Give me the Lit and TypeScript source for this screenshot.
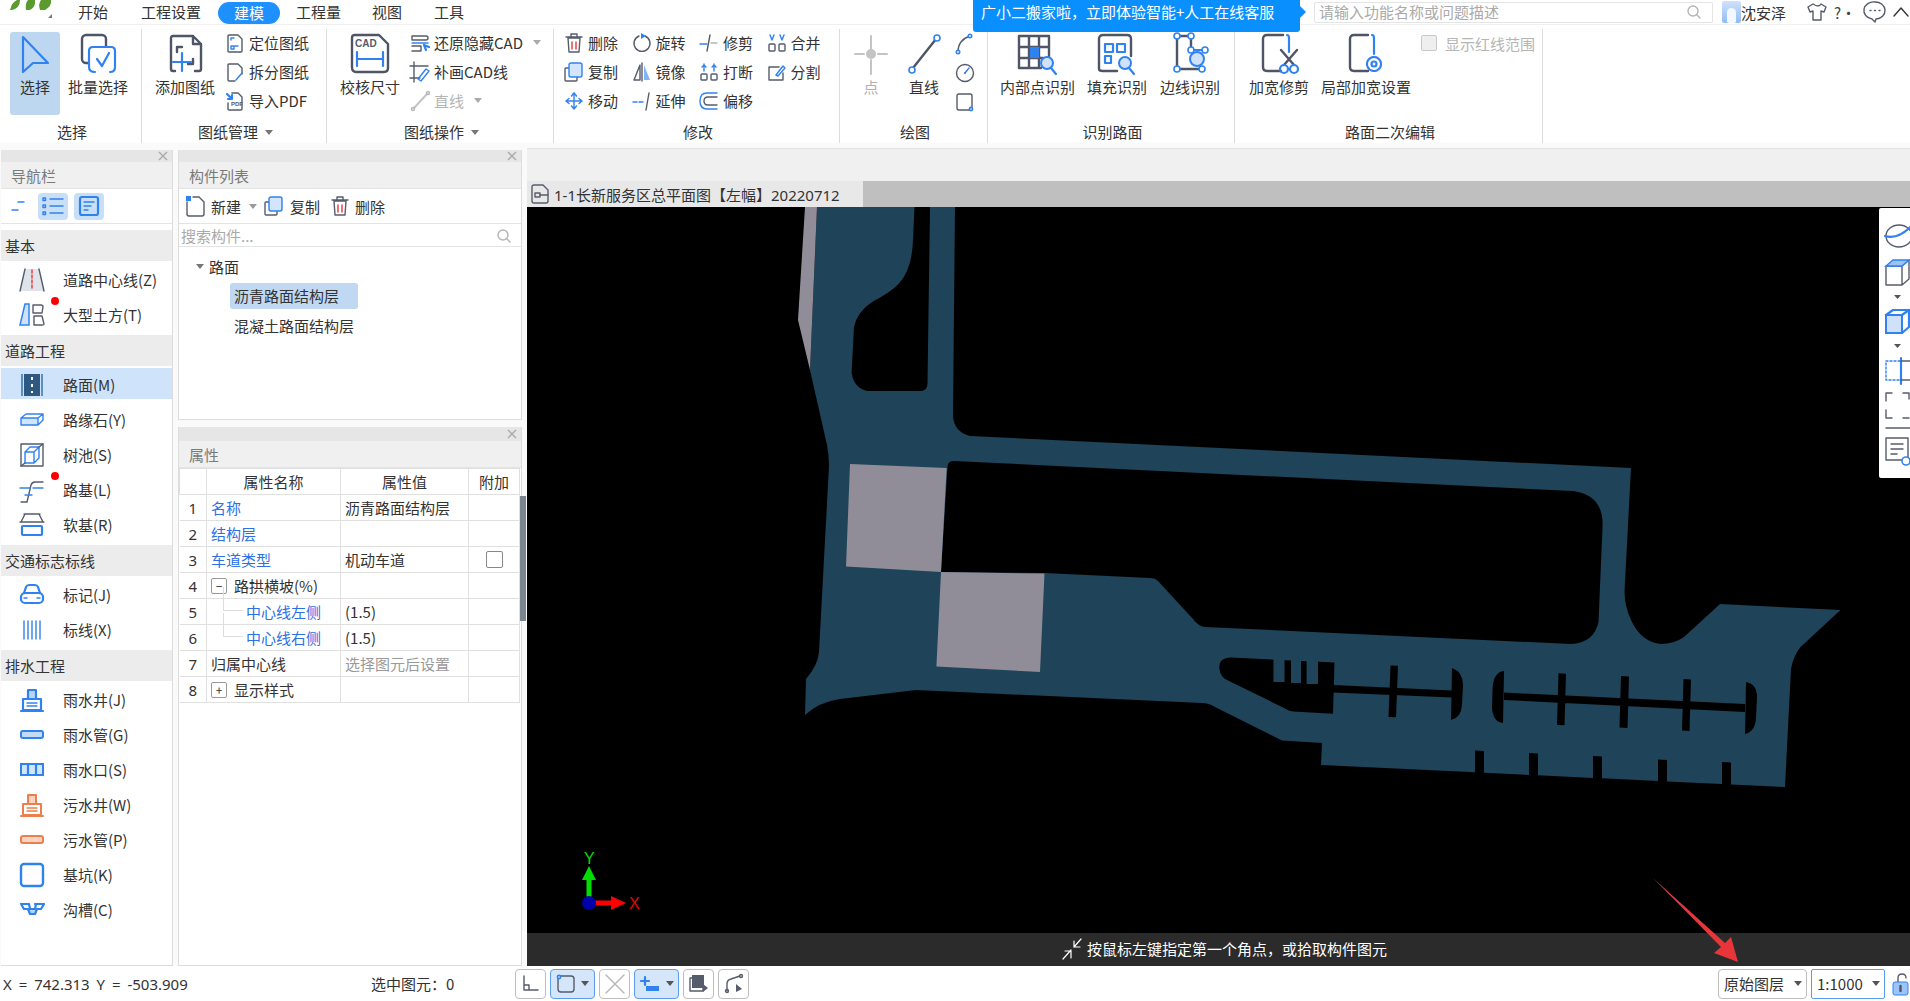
import { LitElement, html, svg, css } from "lit";
import { customElement } from "lit/decorators.js";

const s = (w: number, h: number, body: unknown) =>
  html`<svg width=${w} height=${h} viewBox="0 0 ${w} ${h}">${body}</svg>`;

const big: Record<string, unknown> = {
  select: html`<svg width="40" height="40" viewBox="0 0 40 40"><path class="b2" d="M8 3 L33 29 L18 29 L8 38 Z"/></svg>`,
  batch: html`<svg width="44" height="40" viewBox="0 0 44 40"><rect class="d2" x="6" y="1" width="24" height="28" rx="4"/><path class="w" d="M13 13h24v20q0 5-5 5H18q-5 0-5-5z"/><path class="b2" d="M19 38q-6 0-6-5V17q0-4 4-4h18q4 0 4 4v16q0 5-5 5"/><path class="b2" d="M21 25l5 7 7-13"/></svg>`,
  add: html`<svg width="44" height="40" viewBox="0 0 44 40"><path class="d2" d="M8 35V4q0-2 2-2h20l8 8v25q0 2-2 2h-4M12 37h-2q-2 0-2-2M30 2v8h8"/><path class="d2" d="M14 18v-5h5M30 25v5h-5"/><path class="b2" d="M19 19v18M10 28h18"/></svg>`,
  check: html`<svg width="44" height="42" viewBox="0 0 44 42"><path class="d2" d="M4 34V5q0-3 3-3h24l9 9v24q0 4-4 4H8q-4 0-4-5z"/><path class="b2" d="M9 19v14M35 19v14M9 26h26"/><text class="cad" x="7" y="14">CAD</text></svg>`,
  point: html`<svg width="40" height="40" viewBox="0 0 40 40"><path class="g2" d="M20 2v13M20 26v14M4 20h9M27 20h9"/><circle cx="20" cy="20" r="5" fill="#c4c4c4"/></svg>`,
  line: html`<svg width="40" height="40" viewBox="0 0 40 40"><path class="d2" d="M9 34 L32 5"/><circle class="bw" cx="8" cy="36" r="3"/><circle class="bw" cx="33" cy="4" r="3"/></svg>`,
  inner: html`<svg width="44" height="42" viewBox="0 0 44 42"><path class="d2" d="M3 3h30v22M3 3v32h22M3 14h30M3 25h24M13 3v32M23 3v32"/><rect x="14" y="14" width="9" height="11" fill="#2f82f0"/><circle cx="31" cy="30" r="6" fill="#cfe2fa" stroke="#2f82f0" stroke-width="2"/><path class="b2" d="M35 35l5 6"/></svg>`,
  fillr: html`<svg width="44" height="42" viewBox="0 0 44 42"><path class="d2" d="M4 36V6q0-4 4-4h24q4 0 4 4v17M4 36q0 2 4 2h14"/><path class="b2" d="M10 11h8v8h-8zM22 11h8v8h-8zM10 23h6v7h-6z"/><circle cx="30" cy="30" r="6" fill="#cfe2fa" stroke="#2f82f0" stroke-width="2"/><path class="b2" d="M34 35l5 6"/></svg>`,
  edge: html`<svg width="44" height="42" viewBox="0 0 44 42"><path class="d2" d="M9 3v33h24M9 3h14v14"/><path class="b2" d="M23 17h13"/><circle class="bw" cx="9" cy="3" r="3"/><circle class="bw" cx="23" cy="3" r="3"/><circle class="bw" cx="23" cy="17" r="3"/><circle class="bw" cx="37" cy="17" r="3"/><circle class="bw" cx="9" cy="36" r="3"/><circle class="bw" cx="34" cy="36" r="3"/><circle cx="29" cy="26" r="7" fill="#cfe2fa" stroke="#2f82f0" stroke-width="2"/></svg>`,
  trim: html`<svg width="44" height="42" viewBox="0 0 44 42"><path class="d2" d="M26 2H10Q6 2 6 6v28q0 4 4 4h14"/><path class="b2" d="M30 2q2 0 2 3v14"/><path class="d2" d="M24 17l13 15M40 17L27 32"/><circle class="b2" cx="27" cy="36" r="4"/><circle class="b2" cx="37" cy="36" r="4"/></svg>`,
  local: html`<svg width="44" height="42" viewBox="0 0 44 42"><path class="d2" d="M24 2H10Q6 2 6 6v28q0 4 4 4h14"/><path class="b2" d="M28 2q2 0 2 3v16"/><circle class="b2" cx="30" cy="31" r="7" stroke-dasharray="3 1"/><circle class="b2" cx="30" cy="31" r="2.5"/></svg>`,
};

const mini: Record<string, unknown> = {
  locate: s(20, 20, svg`<path class="d1" d="M3 18V3q0-1 1-1h9l4 4v12q0 1-1 1H4q-1 0-1-1z"/><path class="b1" d="M6 7V5h3M6 16v-3h3v3zM10 13h3"/>`),
  split: s(20, 20, svg`<path class="d1" d="M3 18V3q0-1 1-1h9l4 4v6M3 18q0 1 1 1h6"/><path class="b1" d="M11 18l6-7"/>`),
  pdf: s(20, 20, svg`<path class="d1" d="M7 2h6l4 4v12q0 1-1 1H4q-1 0-1-1v-6"/><path class="b2" d="M2 3l5 5M7 4v4H3"/><text class="pdf" x="6" y="15">PDF</text>`),
  restore: s(22, 20, svg`<path class="d1" d="M3 3h14q2 0 2 2t-2 2H3zM3 13h9v5H3"/><path class="b1" d="M3 10h16"/><path class="b2" d="M20 14l-5-2 2 5"/>`),
  redraw: s(22, 22, svg`<path class="d1" d="M5 1v20M1 5h18M1 17h10"/><path class="b1" d="M9 18l8-10 3 2-8 10z"/>`),
  greyline: s(20, 20, svg`<path class="g2" d="M4 17L17 3"/><circle class="g1" cx="3" cy="18" r="1.5"/><circle class="g1" cx="18" cy="2" r="1.5"/>`),
  del: s(18, 20, svg`<path class="d1" d="M3 5h12l-1 14H4zM1 4h16M6 4V1h6v3"/><path class="r1" d="M7 9v7M11 9v7"/>`),
  copy: s(20, 20, svg`<rect class="d1" x="1" y="6" width="12" height="13" rx="1"/><rect x="5" y="1" width="13" height="14" rx="2" fill="#d3e5fb" stroke="#2f82f0" stroke-width="1.4"/>`),
  move: s(20, 20, svg`<path class="b1" d="M10 2v16M2 10h16M10 2L7.500 5M10 2l2.500 3M10 18l-2.500-3M10 18l2.500-3M2 10l3-2.500M2 10l3 2.500M18 10l-3-2.500M18 10l-3 2.500"/>`),
  rotate: s(20, 20, svg`<path class="d1" d="M13 3a8 8 0 1 1-6 0"/><path class="fb" d="M9 0l5 3-5 3z"/>`),
  mirror: s(20, 20, svg`<path class="d1" d="M10 1v18M8 3L2 18h6z"/><path class="fb" d="M12 3l6 15h-6z" opacity=".6"/>`),
  extend: s(20, 20, svg`<path class="b1" d="M1 11h12" stroke-dasharray="4 2"/><path class="d1" d="M17 2l-3 17"/>`),
  trimS: s(20, 20, svg`<path class="d1" d="M11 2L8 18"/><path class="b1" d="M1 11h7"/><path class="g1" d="M12 10h6"/>`),
  brk: s(20, 20, svg`<rect class="d1" x="2" y="12" width="6" height="6" rx="1"/><rect class="d1" x="12" y="12" width="6" height="6" rx="1"/><path class="b1" d="M5 2v7M15 2v7M3 5l2-2 2 2M13 5l2-2 2 2"/>`),
  offset: s(20, 20, svg`<path class="d1" d="M18 6H9q-4 0-4 4t4 4h9"/><path class="b1" d="M18 2H8q-7 0-7 8t7 8h10"/>`),
  merge: s(20, 20, svg`<rect class="d1" x="2" y="11" width="6" height="7" rx="1"/><rect class="d1" x="12" y="11" width="6" height="7" rx="1"/><path class="b1" d="M3 2l2 5 2-5M13 2l2 5 2-5"/>`),
  cut: s(20, 20, svg`<path class="d1" d="M12 5H2v13h14v-7"/><path class="b1" d="M9 13l7-9 2 2-7 8z"/>`),
  arc: s(18, 22, svg`<path class="d1" d="M3 19Q3 7 15 3"/><circle class="bw" cx="3" cy="19" r="1.7"/><circle class="bw" cx="15" cy="3" r="1.7"/>`),
  circle: s(20, 22, svg`<circle class="d1" cx="10" cy="11" r="8.500"/><path class="b1" d="M10 11l4-5"/><circle class="fb" cx="10" cy="11" r="1"/>`),
  rect: s(20, 22, svg`<rect class="d1" x="2" y="3" width="15" height="16" rx="2"/><circle class="bw" cx="16" cy="18" r="1.600"/>`),
  newDoc: s(20, 22, svg`<path class="d1" d="M2 7v12q0 2 2 2h13q2 0 2-2V7l-5-5H8"/><path class="fb" d="M1 1h5v5H1z"/>`),
  search: s(14, 14, svg`<circle class="g1" cx="6" cy="6" r="5"/><path class="g1" d="M9.500 9.500l3.500 3.500"/>`),
  doc: s(20, 20, svg`<path class="d1" d="M2 17V3q0-2 2-2h9l5 5v11q0 2-2 2H4q-2 0-2-2z"/><rect class="d1" x="5" y="9" width="5" height="4"/><path class="d1" d="M10 11h8"/>`),
  shirt: s(20, 20, svg`<path class="d1" d="M6 2L1 5l2 5 3-1v9h8V9l3 1 2-5-5-3q-2 4-8 0z"/>`),
  chat: s(22, 22, svg`<path class="d1" d="M11 1a9.500 8.500 0 1 0-3 17l3 3 1-3A9.500 8.500 0 0 0 11 1z"/><path class="d1" d="M6 9.500h1M10.500 9.500h1M15 9.500h1"/>`),
  up: s(16, 12, svg`<path class="k1" d="M1 10l7-8 7 8"/>`),
  hint: s(20, 22, svg`<path class="wh" d="M1 21l8-9M3 13h6v7M19 1l-7 8M12 3v6h6" />`),
  lock: s(18, 24, svg`<path class="d1" d="M6 11V6q0-4 4-4t4 4"/><rect x="1" y="10" width="15" height="13" rx="2" fill="#9cc4f6" stroke="#2f82f0"/><path class="d2" d="M8.500 14v5"/>`),
};

const nav: Record<string, unknown> = {
  road: s(26, 24, svg`<path d="M6 1L1 23h24L20 1z" fill="#dfe3ea"/><path class="d1" d="M6 1L1 23M20 1l5 22"/><path class="r1" d="M13 2v20" stroke-dasharray="3 2"/>`),
  earth: s(26, 24, svg`<path d="M6 1L1 22h9V1z" fill="#cfe2fa" stroke="#2f82f0" stroke-width="1.500"/><path class="d1" d="M14 2h8q2 0 2 2l-1 6h-9zM15 13h8l2 8q0 1-2 1h-8z"/>`),
  pave: s(26, 26, svg`<rect x="5" y="2" width="16" height="22" fill="#2e5a82"/><path d="M3 2v22M23 2v22" stroke="#5b8ec2" stroke-width="2"/><path d="M13 5v16" stroke="#fff" stroke-width="2" stroke-dasharray="3 4"/>`),
  curb: s(26, 24, svg`<path d="M2 10h17v7H2z" fill="#d3e5fb"/><path class="b1" d="M2 10h17l5-4H7zM19 17l5-5V6M2 10v7h17v-7"/>`),
  pit: s(26, 26, svg`<rect class="d1" x="2" y="2" width="22" height="22"/><path class="b1" d="M6 10l5-5h9v11l-5 5H6zM6 10h9v11M15 10l5-5"/><path class="d1" d="M2 24L6 21M24 2l-4 3"/>`),
  base: s(26, 26, svg`<path class="d1" d="M2 25h6l4-17q1-3 4-3h8"/><path class="b1" d="M1 11h10M14 11h10M6 18h7"/>`),
  soft: s(26, 24, svg`<path class="d1" d="M6 1L2 9M20 1l4 8M1 9h24M5 1h16"/><rect class="b2" x="3" y="13" width="20" height="9" rx="1"/>`),
  car: s(26, 24, svg`<path class="b2" d="M5 10l2-6q1-2 3-2h6q2 0 3 2l2 6"/><rect class="b2" x="2" y="10" width="22" height="10" rx="4"/><path class="b1" d="M7 10h12M5 15h3M18 15h3"/>`),
  lines: s(24, 24, svg`<path class="b1" d="M4 3v18M8 3v18M12 3v18M16 3v18M20 3v18"/>`),
  well: s(26, 24, svg`<path d="M9 3h8v8H9z" fill="#b8d4f8"/><path class="b2" d="M9 11V2h8v9M4 11h18v11H4zM2 23h22"/><path class="b1" d="M8 15h10M8 18h10"/>`),
  pipe: s(26, 12, svg`<rect x="2" y="2" width="22" height="7" rx="2" fill="#c4dbf9" stroke="#2f82f0" stroke-width="2"/>`),
  inlet: s(26, 16, svg`<rect x="2" y="2" width="22" height="11" fill="#d3e5fb" stroke="#2f82f0" stroke-width="2"/><path class="b2" d="M9 2v11M17 2v11"/>`),
  wellO: s(26, 24, svg`<path d="M9 3h8v8H9z" fill="#fbd3c0"/><path class="o2" d="M9 11V2h8v9M4 11h18v11H4zM2 23h22"/><path class="o1" d="M8 15h10M8 18h10"/>`),
  pipeO: s(26, 12, svg`<rect x="2" y="2" width="22" height="7" rx="2" fill="#fbd3c0" stroke="#ec7f4e" stroke-width="2"/>`),
  pitB: s(26, 26, svg`<rect x="2" y="2" width="22" height="22" rx="3" fill="#fff" stroke="#2f82f0" stroke-width="2.400"/>`),
  ditch: s(26, 18, svg`<path d="M9 8h9l-2 6h-5z" fill="#b8d4f8"/><path class="b2" d="M2 3h8M16 3h8M2 3l3 5h4l2 5h5l2-5h4l3-5M10 3l1 5h5l1-5"/>`),
};

type Item = { icon: string; text: string; dot?: boolean; on?: boolean };
const sections: { title: string; items: Item[] }[] = [
  { title: "基本", items: [{ icon: "road", text: "道路中心线(Z)" }, { icon: "earth", text: "大型土方(T)", dot: true }] },
  { title: "道路工程", items: [{ icon: "pave", text: "路面(M)", on: true }, { icon: "curb", text: "路缘石(Y)" }, { icon: "pit", text: "树池(S)" }, { icon: "base", text: "路基(L)", dot: true }, { icon: "soft", text: "软基(R)" }] },
  { title: "交通标志标线", items: [{ icon: "car", text: "标记(J)" }, { icon: "lines", text: "标线(X)" }] },
  { title: "排水工程", items: [{ icon: "well", text: "雨水井(J)" }, { icon: "pipe", text: "雨水管(G)" }, { icon: "inlet", text: "雨水口(S)" }, { icon: "wellO", text: "污水井(W)" }, { icon: "pipeO", text: "污水管(P)" }, { icon: "pitB", text: "基坑(K)" }, { icon: "ditch", text: "沟槽(C)" }] },
];

const close = html`<svg class="x" width="10" height="10" viewBox="0 0 10 10"><path d="M1 1l8 8M9 1L1 9"/></svg>`;

@customElement("app-root")
export class AppRoot extends LitElement {
  static styles = css`
    :host { display: block; width: 1910px; height: 1001px; overflow: hidden; position: relative; background: #fafafa;
      font-family: "Noto Sans CJK SC", "Noto Sans", sans-serif; font-size: 15px; color: #333; }
    * { box-sizing: border-box; }
    svg { display: block; flex: none; overflow: visible; }
    .d1,.d2,.b1,.b2,.g1,.g2,.r1,.o1,.o2,.k1,.wh { fill: none; stroke-linecap: round; stroke-linejoin: round; }
    .d1 { stroke: #555c6b; stroke-width: 1.4; } .d2 { stroke: #4d5566; stroke-width: 2.4; }
    .b1 { stroke: #2f82f0; stroke-width: 1.4; } .b2 { stroke: #2f82f0; stroke-width: 2.2; }
    .g1 { stroke: #b5b5b5; stroke-width: 1.4; } .g2 { stroke: #c4c4c4; stroke-width: 2; }
    .r1 { stroke: #e5373a; stroke-width: 1.4; }
    .o1 { stroke: #ec7f4e; stroke-width: 1.4; } .o2 { stroke: #ec7f4e; stroke-width: 2; }
    .k1 { stroke: #333; stroke-width: 1.4; } .wh { stroke: #fff; stroke-width: 1.2; }
    .fb { fill: #2f82f0; } .w { fill: #fff; }
    .bw { fill: #fff; stroke: #2f82f0; stroke-width: 1.6; }
    .cad { font: 700 10px "Liberation Sans", sans-serif; fill: #555c6b; }
    .pdf { font: 700 6px "Liberation Sans", sans-serif; fill: #555c6b; }
    .x { stroke: #aaa; stroke-width: 1.4; }

    .top { height: 24px; display: flex; align-items: center; background: #fff; }
    .logo { width: 72px; height: 24px; flex: none; }
    .menu { display: flex; align-items: center; }
    .mi { line-height: 22px; }
    .mi.m0 { margin-left: 6px; } .mi.m1 { margin-left: 33px; } .mi.m2 { margin-left: 17px; padding: 0 16px; background: #1e90ff; color: #fff; border-radius: 11px; margin-top: 2px; }
    .mi.m3 { margin-left: 16px; } .mi.m4 { margin-left: 31px; } .mi.m5 { margin-left: 32px; }
    .top-right { margin-left: auto; display: flex; align-items: center; height: 24px; }
    .find { width: 399px; height: 21px; border: 1px solid #e4e4e4; border-radius: 2px; display: flex; align-items: center; justify-content: space-between; padding: 0 11px 1px 4px; color: #aaa; margin-right: 9px; }
    .avatar { width: 19px; height: 22px; background: linear-gradient(#cfe2fa,#8fbdf5); border-radius: 2px; display: flex; align-items: flex-end; justify-content: center; }
    .avatar i { width: 9px; height: 15px; background: #f4f8fe; border-radius: 5px 5px 2px 2px; display: block; }
    .uname { width: 66px; }
    .shirtb { width: 27px; }
    .qb { width: 30px; color: #444; white-space: nowrap; }
    .chatb { width: 29px; }
    .upb { width: 17px; }
    .tip { position: absolute; left: 973px; top: 0; width: 327px; height: 32px; background: #0a8fff; color: #fff; border-radius: 0 0 3px 3px; padding: 0 8px; line-height: 23px; white-space: nowrap; }
    .tip::after { content: ""; position: absolute; right: -6px; top: 6px; border-left: 6px solid #0a8fff; border-top: 6px solid transparent; border-bottom: 6px solid transparent; }

    .ribbon { height: 119px; display: flex; background: #fff; border-top: 1px solid #f0f0f0; }
    .grp { display: flex; flex-direction: column; margin-top: 4px; border-right: 1px solid #dcdcdc; flex: none; }
    .g1w { width: 142px; } .g2w { width: 185px; } .g3w { width: 227px; } .g4w { width: 286px; }
    .g5w { width: 148px; } .g6w { width: 247px; } .g7w { width: 308px; }
    .body { flex: 1; display: flex; }
    .glabel { height: 24px; padding: 2px 0 0 3px; display: flex; align-items: center; justify-content: center; gap: 7px; line-height: 22px; }
    .caret { width: 0; height: 0; border-top: 5px solid #777; border-left: 4px solid transparent; border-right: 4px solid transparent; display: block; flex: none; }
    .bb { height: 83px; margin-top: 3px; display: flex; flex-direction: column; align-items: center; padding-top: 2px; border-radius: 3px; flex: none; }
    .bb .ico { height: 40px; display: flex; align-items: center; justify-content: center; }
    .bb .t { margin-top: 2px; line-height: 22px; white-space: nowrap; }
    .bb.on { background: #bdd7f0; }
    .bb.dis .t { color: #b0b0b0; }
    .w50 { width: 50px; } .w60 { width: 60px; } .w75 { width: 75px; } .w90 { width: 90px; }
    .ml10 { margin-left: 10px; } .ml8 { margin-left: 8px; } .ml13 { margin-left: 13px; } .ml12 { margin-left: 12px; } .ml6 { margin-left: 6px; } .ml14 { margin-left: 14px; } .ml3 { margin-left: 3px; }
    .col { display: flex; flex-direction: column; margin-top: -1px; flex: none; }
    .sb { height: 29px; display: flex; align-items: center; gap: 4px; white-space: nowrap; }
    .sb .si { width: 20px; display: flex; justify-content: center; }
    .sb.dis { color: #b5b5b5; }
    .sb .caret { margin-left: 6px; border-top-color: #aaa; }
    .modgrid { display: grid; grid-template-columns: repeat(4, 67.5px); grid-auto-rows: 29px; margin: -1px 0 0 10px; }
    .minis { display: flex; flex-direction: column; margin-left: 6px; }
    .minis div { height: 29px; display: flex; align-items: center; }
    .cb { display: flex; align-items: center; gap: 8px; height: 16px; margin: 6px 0 0 10px; color: #b5b5b5; white-space: nowrap; }
    .cb i { width: 16px; height: 16px; border: 1px solid #c8c8c8; border-radius: 2px; background: #efefef; display: block; }

    .main { height: 818px; margin-top: 5px; display: flex; }
    .left { width: 172px; margin-left: 1px; margin-top: 2px; display: flex; flex-direction: column; background: #fff; border: 1px solid #ddd; border-top: 0; border-left: 0; flex: none; }
    .strip { height: 12px; background: #e6e6e6; display: flex; justify-content: flex-end; align-items: center; padding-right: 4px; flex: none; }
    .phead { height: 27px; background: #f0f0f0; color: #7a7a7a; padding-left: 10px; line-height: 27px; border-bottom: 1px solid #e4e4e4; flex: none; }
    .ntools { height: 35px; display: flex; align-items: center; border-bottom: 1px solid #e4e4e4; flex: none; }
    .nt { width: 30px; height: 27px; border-radius: 4px; display: flex; align-items: center; justify-content: center; }
    .nt.on { background: #c8dff7; }
    .nt.first { margin-left: 2px; margin-right: 5px; }
    .nt.sec { margin-left: 6px; }
    .nav { margin-top: 6px; display: flex; flex-direction: column; }
    .shead { height: 31px; line-height: 31px; background: #ececec; padding-left: 4px; margin-top: 4px; }
    .shead.f { margin-top: 0; }
    .nitem { height: 31px; margin: 2px 0; padding-top: 2px; display: flex; align-items: center; position: relative; }
    .nitem.on { background: #cfe4fb; }
    .nitem .ni { width: 62px; display: flex; justify-content: center; padding-left: 4px; padding-right: 4px; flex: none; }
    .dot { position: absolute; left: 50px; top: -1px; width: 8px; height: 8px; border-radius: 50%; background: #f00; }

    .mid { width: 344px; margin-left: 5px; margin-top: 2px; display: flex; flex-direction: column; gap: 7px; flex: none; }
    .panel { display: flex; flex-direction: column; background: #fff; border: 1px solid #ddd; border-top: 0; }
    .p1 { height: 270px; } .p2 { flex: 1; height: 0; }
    .p2 .strip { height: 14px; }
    .mtools { height: 35px; display: flex; align-items: center; padding-left: 6px; border-bottom: 1px solid #e4e4e4; flex: none; }
    .mtools span { margin-left: 6px; }
    .mt2 { margin-left: 7px; } .mt3 { margin-left: 11px; }
    .mcar { margin-left: 8px; border-top-color: #999; }
    .msearch { height: 23px; display: flex; align-items: center; justify-content: space-between; padding: 1px 10px 0 2px; color: #aaa; border-bottom: 1px solid #e4e4e4; flex: none; }
    .tree { padding-top: 4px; flex: 1; }
    .tr { height: 30px; display: flex; align-items: center; }
    .tr .caret { margin: 0 5px 0 17px; }
    .leaf { margin-left: 51px; padding: 0 4px; height: 26px; line-height: 26px; border-radius: 3px; width: 128px; white-space: nowrap; }
    .leaf.on { background: #c0d8f2; }
    table { border-collapse: collapse; table-layout: fixed; width: 340px; }
    th, td { height: 26px; border: 1px solid #e0e0e0; font-weight: 400; padding: 0 4px; white-space: nowrap; line-height: 24px; }
    th { text-align: center; }
    td:first-child { text-align: center; border-left: 0; padding: 0; font-family: "Noto Sans", sans-serif; }
    .c0 { width: 27px; } .c1 { width: 134px; } .c2 { width: 128px; } .c3 { width: 51px; }
    .lnk { color: #2c6fe6; }
    .muted { color: #9a9a9a; }
    .cellrow { display: flex; align-items: center; height: 24px; }
    .tog { width: 16px; height: 16px; border: 1px solid #999; border-radius: 2px; margin-right: 7px; display: flex; align-items: center; justify-content: center; font-size: 12px; line-height: 12px; font-style: normal; }
    .indent { padding-left: 35px; position: relative; }
    .vl { position: absolute; left: 12px; top: -13px; bottom: 13px; width: 20px; border-left: 1px solid #ddd; border-bottom: 1px solid #ddd; }
    .chk { width: 17px; height: 17px; border: 1px solid #888; border-radius: 2px; margin: 0 auto; display: block; }

    .rightcol { flex: 1; display: flex; flex-direction: column; margin-left: 5px; position: relative; width: 0; }
    .sbar { position: absolute; left: -7px; top: 348px; width: 6px; height: 125px; background: #7a8590; }
    .rtop { height: 33px; background: #f0f0f0; border-top: 1px solid #e2e2e2; flex: none; }
    .tabs { height: 26px; background: #bfbfbf; flex: none; display: flex; }
    .tab { width: 336px; background: #e8e8e8; display: flex; align-items: center; gap: 4px; padding-left: 3px; white-space: nowrap; font-family: "Noto Sans", "Noto Sans CJK SC", sans-serif; font-size: 15px; }
    .canvas { flex: 1; height: 0; background: #000; position: relative; overflow: hidden; }
    .canvas > svg { position: absolute; left: 0; top: 0; }
    .hint { height: 33px; background: #2b2b2b; color: #fff; display: flex; align-items: center; justify-content: center; gap: 5px; padding: 0 0 2px 12px; flex: none; }
    .vt { position: absolute; right: 0; top: 1px; width: 31px; height: 270px; background: #fff; border-radius: 2px 0 0 2px; overflow: hidden; }

    .status { height: 35px; display: flex; align-items: center; background: #fff; position: relative; }
    .coord { position: absolute; left: 3px; font-family: "Noto Sans", sans-serif; word-spacing: 3px; }
    .selc { position: absolute; left: 371px; }
    .sbtns { margin-left: 515px; display: flex; gap: 4px; }
    .sq { height: 30px; width: 31px; border: 1px solid #bdbdbd; border-radius: 4px; display: flex; align-items: center; justify-content: center; gap: 6px; }
    .sq.wide { width: 45px; background: #d5e6fb; border-color: #5a9cf0; }
    .sq .caret { border-top-color: #555; }
    .sr { margin-left: auto; display: flex; align-items: center; gap: 4px; }
    .dd { height: 30px; border: 1px solid #bdbdbd; border-radius: 4px; display: flex; align-items: center; padding: 0 4px 0 5px; justify-content: space-between; }
    .dd.a { width: 89px; } .dd.b { width: 74px; border-color: #5a9cf0; border-radius: 2px; }
    .dd .caret { border-top-color: #555; }
    .lockb { width: 21px; padding-left: 3px; }
    .arrow { position: absolute; left: 0; top: 0; pointer-events: none; }
  `;

  bb(icon: string, text: string, cls = "") {
    return html`<div class="bb ${cls}"><div class="ico">${big[icon]}</div><div class="t">${text}</div></div>`;
  }
  sb(icon: string, text: string, extra = "", caret = false) {
    return html`<div class="sb ${extra}"><div class="si">${mini[icon]}</div><span>${text}</span>${caret ? html`<i class="caret"></i>` : ""}</div>`;
  }

  ribbon() {
    return html`<div class="ribbon">
      <div class="grp g1w"><div class="body">${this.bb("select", "选择", "w50 ml10 on")}${this.bb("batch", "批量选择", "w60 ml8")}</div><div class="glabel">选择</div></div>
      <div class="grp g2w"><div class="body">${this.bb("add", "添加图纸", "w60 ml13")}
        <div class="col ml10">${this.sb("locate", "定位图纸")}${this.sb("split", "拆分图纸")}${this.sb("pdf", "导入PDF")}</div></div>
        <div class="glabel">图纸管理<i class="caret"></i></div></div>
      <div class="grp g3w"><div class="body">${this.bb("check", "校核尺寸", "w60 ml13")}
        <div class="col ml10">${this.sb("restore", "还原隐藏CAD", "", true)}${this.sb("redraw", "补画CAD线")}${this.sb("greyline", "直线", "dis", true)}</div></div>
        <div class="glabel">图纸操作<i class="caret"></i></div></div>
      <div class="grp g4w"><div class="body"><div class="modgrid">
        ${this.sb("del", "删除")}${this.sb("rotate", "旋转")}${this.sb("trimS", "修剪")}${this.sb("merge", "合并")}
        ${this.sb("copy", "复制")}${this.sb("mirror", "镜像")}${this.sb("brk", "打断")}${this.sb("cut", "分割")}
        ${this.sb("move", "移动")}${this.sb("extend", "延伸")}${this.sb("offset", "偏移")}
      </div></div><div class="glabel">修改</div></div>
      <div class="grp g5w"><div class="body">${this.bb("point", "点", "w50 ml6 dis")}${this.bb("line", "直线", "w50 ml3")}
        <div class="minis"><div>${mini.arc}</div><div>${mini.circle}</div><div>${mini.rect}</div></div></div><div class="glabel">绘图</div></div>
      <div class="grp g6w"><div class="body">${this.bb("inner", "内部点识别", "w75 ml12")}${this.bb("fillr", "填充识别", "w60 ml12")}${this.bb("edge", "边线识别", "w60 ml13")}</div><div class="glabel">识别路面</div></div>
      <div class="grp g7w"><div class="body">${this.bb("trim", "加宽修剪", "w60 ml14")}${this.bb("local", "局部加宽设置", "w90 ml12")}
        <div class="cb"><i></i>显示红线范围</div></div><div class="glabel">路面二次编辑</div></div>
    </div>`;
  }

  left() {
    return html`<div class="left">
      <div class="strip">${close}</div><div class="phead">导航栏</div>
      <div class="ntools">
        <div class="nt first"><svg width="14" height="12" viewBox="0 0 14 12"><path class="b1" d="M1 10h6M7 2h6"/></svg></div>
        <div class="nt on"><svg width="22" height="18" viewBox="0 0 22 18"><path class="b1" d="M8 2h13M8 9h13M8 16h13"/><rect class="b1" x="1" y="1" width="2.5" height="2.5"/><rect class="b1" x="1" y="8" width="2.5" height="2.5"/><rect class="b1" x="1" y="15" width="2.5" height="2.5"/></svg></div>
        <div class="nt on sec"><svg width="20" height="20" viewBox="0 0 20 20"><rect class="b2" x="1" y="1" width="18" height="18" rx="2"/><path class="b1" d="M5 6h10M5 10h7M5 14h4"/></svg></div>
      </div>
      <div class="nav">
        ${sections.map((sec, i) => html`<div class="shead ${i === 0 ? "f" : ""}">${sec.title}</div>
          ${sec.items.map((it) => html`<div class="nitem ${it.on ? "on" : ""}"><div class="ni">${nav[it.icon]}</div><span>${it.text}</span>${it.dot ? html`<i class="dot"></i>` : ""}</div>`)}`)}
      </div>
    </div>`;
  }

  mid() {
    return html`<div class="mid">
      <div class="panel p1">
        <div class="strip">${close}</div><div class="phead">构件列表</div>
        <div class="mtools">${mini.newDoc}<span>新建</span><i class="caret mcar"></i><div class="mt2">${mini.copy}</div><span>复制</span><div class="mt3">${mini.del}</div><span>删除</span></div>
        <div class="msearch">搜索构件...${mini.search}</div>
        <div class="tree">
          <div class="tr"><i class="caret"></i>路面</div>
          <div class="tr"><div class="leaf on">沥青路面结构层</div></div>
          <div class="tr"><div class="leaf">混凝土路面结构层</div></div>
        </div>
      </div>
      <div class="panel p2">
        <div class="strip">${close}</div><div class="phead">属性</div>
        <table>
          <colgroup><col class="c0"/><col class="c1"/><col class="c2"/><col class="c3"/></colgroup>
          <tr><th></th><th>属性名称</th><th>属性值</th><th>附加</th></tr>
          <tr><td>1</td><td class="lnk">名称</td><td>沥青路面结构层</td><td></td></tr>
          <tr><td>2</td><td class="lnk">结构层</td><td></td><td></td></tr>
          <tr><td>3</td><td class="lnk">车道类型</td><td>机动车道</td><td><i class="chk"></i></td></tr>
          <tr><td>4</td><td><div class="cellrow"><i class="tog">−</i>路拱横坡(%)</div></td><td></td><td></td></tr>
          <tr><td>5</td><td class="lnk"><div class="indent"><i class="vl"></i>中心线左侧</div></td><td>(1.5)</td><td></td></tr>
          <tr><td>6</td><td class="lnk"><div class="indent"><i class="vl"></i>中心线右侧</div></td><td>(1.5)</td><td></td></tr>
          <tr><td>7</td><td>归属中心线</td><td class="muted">选择图元后设置</td><td></td></tr>
          <tr><td>8</td><td><div class="cellrow"><i class="tog">+</i>显示样式</div></td><td></td><td></td></tr>
        </table>
      </div>
    </div>`;
  }

  canvasSvg() {
    return html`<svg width="1382" height="726" viewBox="528 207 1382 726">
      <path fill="#1f4358" fill-rule="evenodd" d="M818 207 L811 370 L828 445 Q830 455 830 466 L820 652 Q819 665 807 679 L806 715 Q820 702 841 699 L917 690 L1203 703 Q1210 703 1215 706.5 L1283 740.5 L1323 743 L1322 765 L1476 772.3 L1476 750.5 L1485 751 L1485 772.7 L1530 774.9 L1530 753 L1539 753.4 L1539 775.3 L1594 777.9 L1594 756 L1603 756.4 L1603 778.3 L1659 781 L1659 759.5 L1668 760 L1668 781.4 L1723 784 L1723 762 L1732 762.4 L1732 784.4 L1786 787 L1792 669 Q1794 657 1801 647.5 L1841.5 610 L1721 604 L1685 637 Q1675 644 1662 644 Q1642 642 1632 620 Q1625 605 1625.6 590 L1632 468 L971 436 Q955 432 954 416 L956 207 L931 207 L928.5 384 Q928 391 922 391 L868 391 Q855 388 852.6 373 L855 327 Q858 312 873 302 Q892 292 899.5 284 Q913 270 914 240 L915.5 207 Z
      M948.6 466 Q949 461 955 461 L1574 491 Q1604 495 1603.6 525 L1599.5 622 Q1595 643 1571.6 644 L1206 627 Q1199 626 1194 619 L1159 581 Q1156 578 1151 578 L1045.5 573 L942 572 Z
      M1232 657.5 Q1219 658 1220.5 669 Q1221 675 1226 679 L1287 709 Q1290 711 1294 711.5 L1334 713.7 L1335.5 662.5 Z"/>
      <path fill="#908d99" d="M806 207 L818 207 L811 370 L799 320 Z M851 464 L947.7 468 L942 572 L847 566.4 Z M942 572 L1045.5 573.6 L1041 672 L937.4 666.4 Z"/>
      <path fill="#1f4358" d="M1274.5 655h11v27h-11zM1292 656h10v27h-10zM1307.6 657h11.4v27h-11.4z"/>
      <path fill="#000" d="M1334 685 L1453 690.5 L1453 697.6 L1334 692.6 Z M1391.5 665.4 L1399 665.8 L1397 717.3 L1389.5 717 Z M1453 668 Q1464 672 1464 685 L1463 705 Q1462 718 1452 720 Z M1505 671 Q1494 672 1493.5 690 L1493 708 Q1494 722 1504 723 Z M1505 692.6 L1746 704 L1746 712 L1505 700 Z M1559.5 673.3 L1567 673.7 L1565.5 725.2 L1558 725 Z M1622 676 L1630 676.4 L1628.5 728 L1620.5 727.6 Z M1684.5 679 L1692 679.4 L1690.5 731 L1683 730.6 Z M1747 682 Q1758 684 1758 697 L1757 718 Q1756 732 1746 734 Z"/>
      <path d="M590 903V880" stroke="#00dd00" stroke-width="5"/><path fill="#00dd00" d="M590 866l7 14h-14z"/>
      <path d="M590 903h24" stroke="#f00" stroke-width="5"/><path fill="#f00" d="M627 903l-15-7v14z"/>
      <circle cx="590" cy="903" r="7" fill="#0000aa"/>
      <text x="585" y="864" font-family="Liberation Sans" font-size="16" fill="#00dd00">Y</text>
      <text x="630" y="909" font-family="Liberation Sans" font-size="16" fill="#e00">X</text>
    </svg>`;
  }

  vtools() {
    return html`<div class="vt"><svg width="40" height="270" viewBox="0 0 40 270">
      <ellipse class="d1" cx="20" cy="28" rx="13" ry="11"/><path class="b2" d="M6 28q14 4 28-12"/>
      <path class="d1" d="M7 58h16v19H7zM23 58l7-6v19l-7 6"/><path d="M7 58l7-6h16l-7 6z" fill="#9cc4f6" stroke="#2f82f0" stroke-width="1.4"/>
      <path d="M15 87l3.500 4 3.500-4z" fill="#555"/>
      <path d="M7 107h16v18H7z" fill="#cfe2fa" stroke="#2f82f0" stroke-width="2"/><path class="b2" d="M7 107l7-5h16v17l-7 6M23 107l7-5"/>
      <path d="M15 136l3.500 4 3.500-4z" fill="#555"/>
      <rect class="b1" x="7" y="153" width="15" height="19" stroke-dasharray="2 2"/><path class="b2" d="M22 150v26"/><path class="d1" d="M22 153h15M22 172h15"/>
      <path class="d1" d="M13 185H7v8M7 202v8h6M24 185h6v6M24 210h6"/>
      <path class="d1" d="M7 220h28"/>
      <path class="d1" d="M7 230h22v22H7zM12 236h12M12 241h12M12 246h6"/><circle cx="27" cy="253" r="4" fill="#fff" stroke="#2f82f0" stroke-width="1.6"/>
    </svg></div>`;
  }

  render() {
    return html`
      <div class="top">
        <div class="logo"><svg width="72" height="24" viewBox="0 0 72 24">
          <path fill="#5a9a2e" d="M10 10q2-8 7-10h3q0 8-8 10zM26 10q-1-7 2-10h7q1 7-5 10zM40 10q-2-6 1-10h10q1 6-6 10z"/>
          <path fill="#777" d="M48 18l4-4v4z"/></svg></div>
        <div class="menu">
          <div class="mi m0">开始</div><div class="mi m1">工程设置</div><div class="mi m2">建模</div><div class="mi m3">工程量</div><div class="mi m4">视图</div><div class="mi m5">工具</div>
        </div>
        <div class="top-right">
          <div class="find">请输入功能名称或问题描述${mini.search}</div>
          <div class="avatar"><i></i></div><div class="uname">沈安泽</div>
          <div class="shirtb">${mini.shirt}</div><div class="qb">?·</div>
          <div class="chatb">${mini.chat}</div><div class="upb">${mini.up}</div>
        </div>
      </div>
      ${this.ribbon()}
      <div class="main">
        ${this.left()}
        ${this.mid()}
        <div class="rightcol">
          <i class="sbar"></i>
          <div class="rtop"></div>
          <div class="tabs"><div class="tab">${mini.doc}<span>1-1长新服务区总平面图【左幅】20220712</span></div></div>
          <div class="canvas">${this.canvasSvg()}${this.vtools()}</div>
          <div class="hint">${mini.hint}<span>按鼠标左键指定第一个角点，或拾取构件图元</span></div>
        </div>
      </div>
      <div class="status">
        <span class="coord">X = 742.313 Y = -503.909</span>
        <span class="selc">选中图元：0</span>
        <div class="sbtns">
          <div class="sq"><svg width="18" height="18" viewBox="0 0 18 18"><path class="d1" d="M2 1v14h14M2 10h5v5"/></svg></div>
          <div class="sq wide"><svg width="18" height="18" viewBox="0 0 18 18"><rect class="d1" x="1" y="1" width="16" height="16" rx="3"/><circle class="bw" cx="2" cy="2" r="1.6"/></svg><i class="caret"></i></div>
          <div class="sq"><svg width="20" height="20" viewBox="0 0 20 20"><path class="g1" d="M1 1l18 18M19 1L1 19"/></svg></div>
          <div class="sq wide"><svg width="20" height="18" viewBox="0 0 20 18"><path class="b2" d="M1 6h8M5 2v8"/><rect class="fb" x="6" y="11" width="13" height="5"/></svg><i class="caret"></i></div>
          <div class="sq"><svg width="20" height="20" viewBox="0 0 20 20"><rect class="d1" x="1" y="4" width="13" height="13"/><rect x="3" y="1" width="12" height="13" fill="#555c6b"/><path fill="#555c6b" d="M14 10l5 4-5 4z"/></svg></div>
          <div class="sq"><svg width="20" height="20" viewBox="0 0 20 20"><path class="d1" d="M3 17V10q0-4 4-5l9-3"/><circle class="d1" cx="3" cy="17" r="1.5"/><circle class="d1" cx="17" cy="2" r="1.5"/><path fill="#555c6b" d="M12 10l6 5-6 3z"/></svg></div>
        </div>
        <div class="sr">
          <div class="dd a"><span>原始图层</span><i class="caret"></i></div>
          <div class="dd b"><span>1:1000</span><i class="caret"></i></div>
          <div class="lockb">${mini.lock}</div>
        </div>
      </div>
      <div class="tip">广小二搬家啦，立即体验智能+人工在线客服</div>
      <svg class="arrow" width="1910" height="1001" viewBox="0 0 1910 1001"><path fill="#e8353a" d="M1653 878 L1725 943 L1731 937 L1738 962 L1714 953 L1721 947 Z"/></svg>
    `;
  }
}
